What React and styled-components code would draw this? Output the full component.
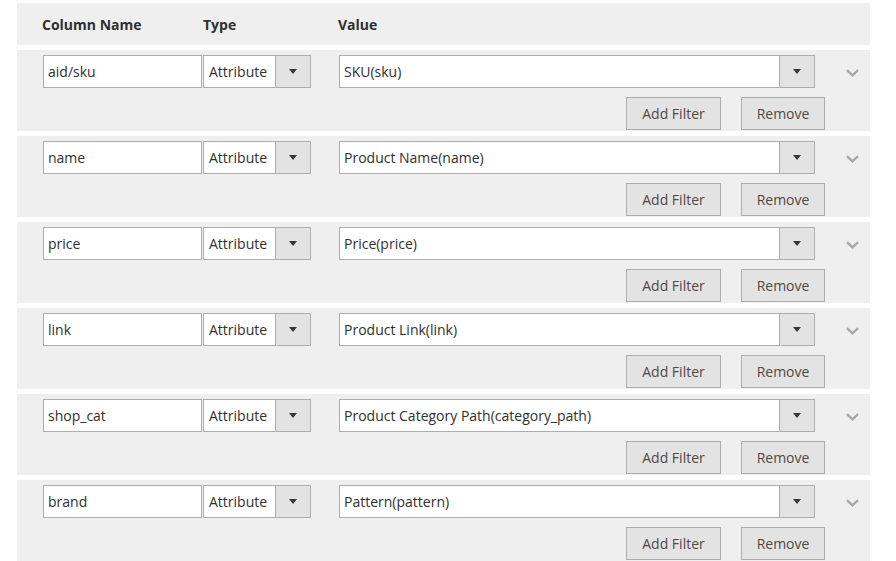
import styled, { createGlobalStyle } from 'styled-components';

const Global = createGlobalStyle`
  body {
    margin: 0;
    background: #ffffff;
    font-family: "Open Sans", "Liberation Sans", sans-serif;
    font-size: 14px;
    color: #303030;
  }
`

const Page = styled.div`
  width: 853px;
  padding: 3px 0 0 17px;
  display: flex;
  flex-direction: column;
  gap: 5px;
`

const Header = styled.div`
  height: 42px;
  background: #efefef;
  display: grid;
  grid-template-columns: 161px 135px 1fr;
  align-items: center;
  padding-left: 25px;
  font-weight: 700;
  color: #303030;
`

const Row = styled.div`
  height: 81px;
  box-sizing: border-box;
  background: #efefef;
  padding: 5px 0 0 26px;
  display: flex;
  flex-direction: column;
`

const Fields = styled.div`
  display: flex;
  align-items: center;
  height: 33px;
`

const Field = styled.div`
  box-sizing: border-box;
  width: ${({w}) => w}px;
  height: 33px;
  margin-right: ${({mr}) => mr || 0}px;
  background: #fff;
  border: 1px solid #adadad;
  display: flex;
  align-items: center;
  padding-left: ${({pl}) => pl || 4}px;
  padding-right: ${({select}) => (select ? 0 : 4)}px;
  color: #303030;
  white-space: nowrap;
`

const Label = styled.span`
  flex: 1;
`

const ArrowBox = styled.span`
  width: 34px;
  height: 31px;
  background: #e3e3e3;
  border-left: 1px solid #adadad;
  display: flex;
  align-items: center;
  justify-content: center;
`

const Triangle = styled.span`
  width: 0;
  height: 0;
  border-left: 4px solid transparent;
  border-right: 4px solid transparent;
  border-top: 5px solid #41362f;
`

const Chevron = styled.svg`
  margin-left: 31px;
  margin-top: 3px;
`

const Actions = styled.div`
  display: flex;
  justify-content: flex-end;
  gap: 20px;
  padding-right: 45px;
  margin-top: 9px;
`

const Button = styled.div`
  box-sizing: border-box;
  width: ${({w}) => w}px;
  height: 33px;
  background: #e3e3e3;
  border: 1px solid #adadad;
  color: #514943;
  display: flex;
  align-items: center;
  justify-content: center;
`

const rows = [
  ['aid/sku', 'SKU(sku)'],
  ['name', 'Product Name(name)'],
  ['price', 'Price(price)'],
  ['link', 'Product Link(link)'],
  ['shop_cat', 'Product Category Path(category_path)'],
  ['brand', 'Pattern(pattern)'],
]

const Select = ({w, mr, pl, children}) => (
  <Field w={w} mr={mr} pl={pl} select>
    <Label>{children}</Label>
    <ArrowBox><Triangle /></ArrowBox>
  </Field>
)

export default function App() {
  return (
    <>
      <Global />
      <Page>
        <Header>
          <span>Column Name</span>
          <span>Type</span>
          <span>Value</span>
        </Header>
        {rows.map(([name, value]) => (
          <Row key={name}>
            <Fields>
              <Field w={159} mr={1}>{name}</Field>
              <Select w={108} mr={28} pl={5}>Attribute</Select>
              <Select w={476} pl={4}>{value}</Select>
              <Chevron width="13" height="8" viewBox="0 0 13 8">
                <path d="M1 1.2 L6.5 6.4 L12 1.2" fill="none" stroke="#a8a8a8" strokeWidth="2.4" />
              </Chevron>
            </Fields>
            <Actions>
              <Button w={95}>Add Filter</Button>
              <Button w={84}>Remove</Button>
            </Actions>
          </Row>
        ))}
      </Page>
    </>
  );
}
